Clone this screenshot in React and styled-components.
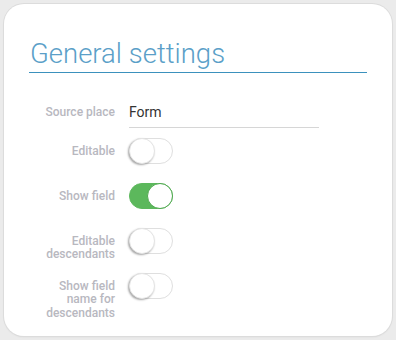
import React, { useState } from "react"
import styled, { createGlobalStyle } from "styled-components"

const GlobalStyle = createGlobalStyle`
    html, body {
        margin: 0;
        padding: 0;
        background: #ebebeb;
        font-family: Roboto, "Liberation Sans", sans-serif;
    }
`

function Toggle({ on, onClick }) {
    return (
        <Track $on={on} onClick={onClick}>
            <Knob $on={on} />
        </Track>
    )
}

function App() {
    const [flags, setFlags] = useState({
        editable: false,
        showField: true,
        editableDesc: false,
        showNameDesc: false,
    })

    const flip = (key) => setFlags({ ...flags, [key]: !flags[key] })

    return (
        <>
            <GlobalStyle />
            <Card>
                <Title>General settings</Title>
                <Form>
                    <InputRow>
                        <Label>Source place</Label>
                        <TextInput defaultValue="Form" />
                    </InputRow>
                    <ToggleRow>
                        <Label $toggle>Editable</Label>
                        <Toggle on={flags.editable} onClick={() => flip("editable")} />
                    </ToggleRow>
                    <ToggleRow>
                        <Label $toggle>Show field</Label>
                        <Toggle on={flags.showField} onClick={() => flip("showField")} />
                    </ToggleRow>
                    <ToggleRow>
                        <Label $toggle>Editable<br />descendants</Label>
                        <Toggle on={flags.editableDesc} onClick={() => flip("editableDesc")} />
                    </ToggleRow>
                    <ToggleRow>
                        <Label $toggle>Show field<br />name for<br />descendants</Label>
                        <Toggle on={flags.showNameDesc} onClick={() => flip("showNameDesc")} />
                    </ToggleRow>
                </Form>
            </Card>
        </>
    )
}

//styled components

const Card = styled.div`
    box-sizing: border-box;
    margin: 4px;
    width: 388px;
    height: 332px;
    background: #fff;
    border-radius: 20px;
    box-shadow: 0 0 0 1px #dcdcdc, 0 1px 2px rgba(0, 0, 0, 0.08);
    padding: 31px 25px 0 25px;
`
const Title = styled.div`
    font-family: "Roboto Light", Roboto, "Liberation Sans", sans-serif;
    font-weight: 300;
    font-size: 27.5px;
    line-height: 37px;
    color: #5b9fc8;
    border-bottom: 1px solid #3b91bd;
    padding-left: 1px;
`
const Form = styled.div`
    display: flex;
    flex-direction: column;
    gap: 10px;
    margin-top: 19px;
`
const InputRow = styled.div`
    display: grid;
    grid-template-columns: 86px 190px;
    column-gap: 14px;
    align-items: start;
    height: 36px;
`
const ToggleRow = styled(InputRow)`
    height: 26px;
    & + & {
        margin-top: 9px;
    }
`
const Label = styled.div`
    text-align: right;
    font-size: 12px;
    font-weight: 500;
    line-height: 13.5px;
    color: #b8b8bf;
    padding-top: ${(p) => (p.$toggle ? "6.5px" : "14px")};
`
const TextInput = styled.input`
    box-sizing: border-box;
    height: 36px;
    width: 190px;
    border: none;
    border-bottom: 1px solid #d6d6d6;
    outline: none;
    padding: 4px 0 0 0;
    font-family: Roboto, "Liberation Sans", sans-serif;
    font-size: 14px;
    color: #333;
    background: transparent;
`
const Track = styled.div`
    position: relative;
    box-sizing: border-box;
    width: 44px;
    height: 26px;
    border-radius: 13px;
    background: ${(p) => (p.$on ? "#5cb85c" : "#fff")};
    border: 1px solid ${(p) => (p.$on ? "#5cb85c" : "#dfdfdf")};
    cursor: pointer;
`
const Knob = styled.div`
    position: absolute;
    top: -1px;
    left: ${(p) => (p.$on ? "17px" : "-1px")};
    box-sizing: border-box;
    width: 26px;
    height: 26px;
    border-radius: 50%;
    background: #fff;
    border: 1px solid ${(p) => (p.$on ? "#4ea84e" : "#e4e4e4")};
    box-shadow: ${(p) => (p.$on ? "none" : "-1px 1px 2px rgba(0, 0, 0, 0.35)")};
`

export default App
